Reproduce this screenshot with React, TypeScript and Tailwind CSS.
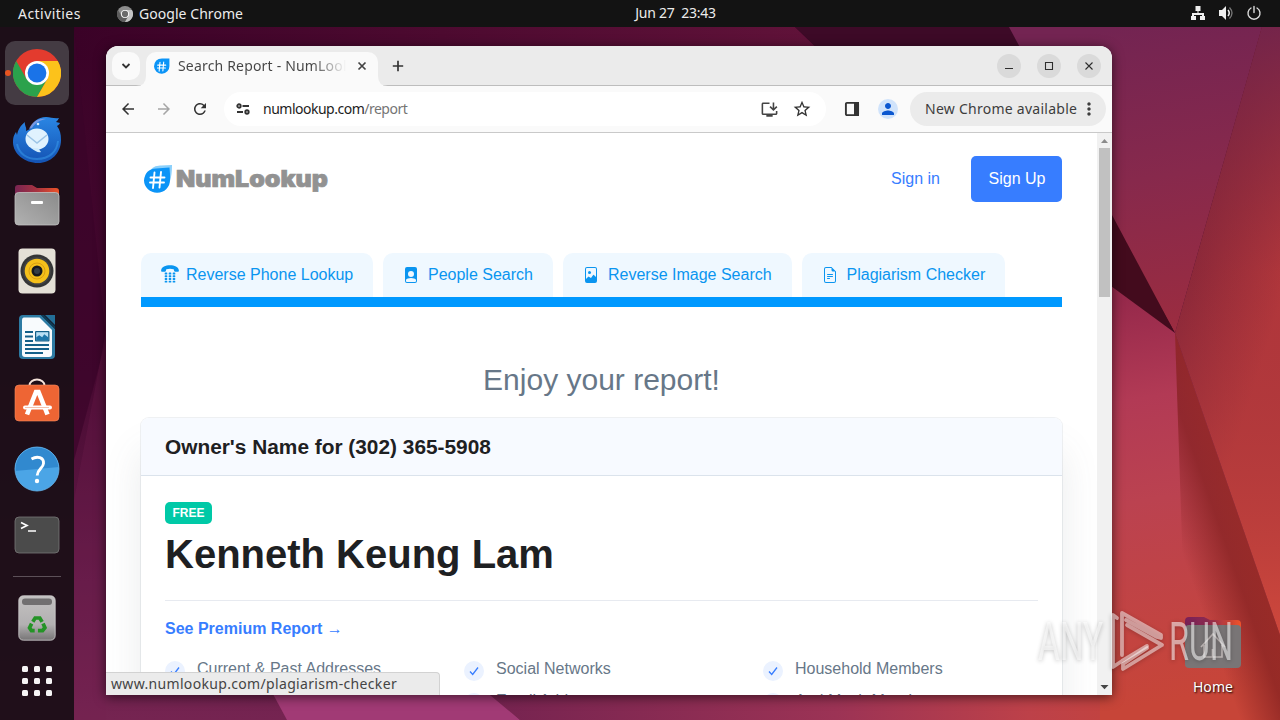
import type { ReactNode } from "react";
import { BsFileEarmarkText, BsFileImage, BsFilePersonFill } from "react-icons/bs";
import {
  MdArrowBack,
  MdArrowForward,
  MdInstallDesktop,
  MdMoreVert,
  MdPerson,
  MdRefresh,
  MdStarBorder,
} from "react-icons/md";

function Wallpaper() {
  return (
    <svg className="absolute inset-0 h-full w-full" viewBox="0 0 1280 720" preserveAspectRatio="none">
      <defs>
        <linearGradient id="wBase" gradientUnits="userSpaceOnUse" x1="0" y1="27" x2="0" y2="720">
          <stop offset="0" stopColor="#3a0227" />
          <stop offset="0.5" stopColor="#480a32" />
          <stop offset="0.8" stopColor="#641b48" />
          <stop offset="1" stopColor="#752451" />
        </linearGradient>
        <linearGradient id="wTop" gradientUnits="userSpaceOnUse" x1="74" y1="0" x2="810" y2="0">
          <stop offset="0" stopColor="#3a0227" />
          <stop offset="1" stopColor="#601239" />
        </linearGradient>
        <linearGradient id="wBottom" gradientUnits="userSpaceOnUse" x1="490" y1="0" x2="1260" y2="0">
          <stop offset="0" stopColor="#752350" />
          <stop offset="0.45" stopColor="#9c3355" />
          <stop offset="0.7" stopColor="#bd4149" />
          <stop offset="0.93" stopColor="#c74435" />
          <stop offset="1" stopColor="#a02b1d" />
        </linearGradient>
        <linearGradient id="wUpper" gradientUnits="userSpaceOnUse" x1="1120" y1="27" x2="1170" y2="330">
          <stop offset="0" stopColor="#732452" />
          <stop offset="0.5" stopColor="#87294c" />
          <stop offset="1" stopColor="#9b2c40" />
        </linearGradient>
        <linearGradient id="wRight" gradientUnits="userSpaceOnUse" x1="1180" y1="240" x2="1290" y2="275">
          <stop offset="0" stopColor="#822438" />
          <stop offset="1" stopColor="#b8393b" />
        </linearGradient>
        <linearGradient id="wRightFade" gradientUnits="userSpaceOnUse" x1="0" y1="27" x2="0" y2="640">
          <stop offset="0" stopColor="#72244c" stopOpacity="0.9" />
          <stop offset="0.4" stopColor="#902c3c" stopOpacity="0.15" />
          <stop offset="1" stopColor="#d34b3c" stopOpacity="0.85" />
        </linearGradient>
        <linearGradient id="wLower" gradientUnits="userSpaceOnUse" x1="1112" y1="300" x2="1180" y2="700">
          <stop offset="0" stopColor="#96294b" />
          <stop offset="0.25" stopColor="#b23a55" />
          <stop offset="0.5" stopColor="#bb4250" />
          <stop offset="1" stopColor="#c74538" />
        </linearGradient>
        <linearGradient id="wStreak" gradientUnits="userSpaceOnUse" x1="1192" y1="582" x2="1252" y2="561">
          <stop offset="0" stopColor="#83201f" stopOpacity="0" />
          <stop offset="0.7" stopColor="#83201f" stopOpacity="0.72" />
          <stop offset="1" stopColor="#8a2320" stopOpacity="0.76" />
        </linearGradient>
      </defs>
      <rect width="1280" height="720" fill="url(#wBase)" />
      <polygon points="74,27 795,27 830,60 74,60" fill="url(#wTop)" />
      <polygon points="795,27 1020,27 1040,90 860,90" fill="#3d0a27" />
      <polygon points="74,27 106,340 74,460" fill="#3b0429" opacity=".7" />
      <polygon points="106,330 74,500 74,720 106,720" fill="#721f50" opacity=".25" />
      <polygon points="260,670 287,720 520,720 470,670" fill="#a13a75" />
      <polygon points="460,670 520,720 1280,720 1280,670" fill="url(#wBottom)" />
      <polygon points="1009,27 1262,27 1175,333 1112,220" fill="url(#wUpper)" />
      <polygon points="1112,215 1175,333 1112,290" fill="#430b1d" />
      <polygon points="1262,27 1280,27 1280,635 1175,333" fill="url(#wRight)" />
      <polygon points="1262,27 1280,27 1280,635 1175,333" fill="url(#wRightFade)" />
      <polygon points="1100,278 1175,333 1280,635 1280,720 1100,720" fill="url(#wLower)" />
      <polygon points="1175,333 1280,635 1280,720 1188,720" fill="url(#wStreak)" />
    </svg>
  );
}

function ChromeLogo({ className, mono = false }: { className: string; mono?: boolean }) {
  const c = mono ? ["#8d8d8d", "#5d5d5d", "#c4c4c4", "#6b6b6b"] : ["#e33b2e", "#2ba24c", "#fcc21b", "#1a73e8"];
  return (
    <svg className={className} viewBox="0 0 48 48">
      <circle cx="24" cy="24" r="24" fill={c[0]} />
      <path d="M3.2 12A24 24 0 0 0 24 48L34.4 30 24 24 13.6 30z" fill={c[1]} />
      <path d="M24 48A24 24 0 0 0 44.8 12H24l10.4 18z" fill={c[2]} />
      <circle cx="24" cy="24" r="12" fill="#fff" />
      <circle cx="24" cy="24" r="9.4" fill={c[3]} />
    </svg>
  );
}

function Thunderbird() {
  return (
    <svg className="mt-px h-12 w-12" viewBox="0 0 48 48">
      <defs>
        <linearGradient id="tb" x1="0" y1="0" x2="0" y2="1">
          <stop offset="0" stopColor="#2a86e4" />
          <stop offset="1" stopColor="#1453b4" />
        </linearGradient>
      </defs>
      <path
        d="M17 13C19 6 25 1 33 1c5 0 8 2 13 1-1 2-2 3-3 4l4 1c-1 2-2 2-3 3 3 4 4 8 4 14 0 13-10 23-23 23S0 38 0 26c0-5 1-7 3-10l1 3c1-5 3-9 8-13-1 3 2 5 1 9z"
        fill="url(#tb)"
      />
      <path d="M4 28c2 10 10 15 20 15 12 0 20-7 21-18" fill="none" stroke="#3fa3f2" strokeWidth="2" opacity=".45" />
      <path d="M16 13c3-7 9-11 17-10-6 1-11 4-14 9z" fill="#8c9fe6" opacity=".8" />
      <ellipse cx="24" cy="23" rx="11.500" ry="10.500" fill="#e0f2fe" />
      <path d="M18 32c4 3 7 5 10 4l-3-4z" fill="#d0ebfc" />
      <path d="M14 19l10 8 10-8" fill="none" stroke="#9cc4e6" strokeWidth="1.500" />
      <circle cx="25" cy="8" r="1.300" fill="#cfe7ff" />
    </svg>
  );
}

function Files() {
  return (
    <svg className="h-[42px] w-[46px]" viewBox="0 0 46 42">
      <defs>
        <linearGradient id="fl" x1="0" y1="0" x2="1" y2="0">
          <stop offset="0" stopColor="#782552" />
          <stop offset=".5" stopColor="#a83340" />
          <stop offset="1" stopColor="#ed5328" />
        </linearGradient>
        <linearGradient id="flg" x1="1" y1="0" x2="0" y2="1">
          <stop offset="0" stopColor="#8b8b8b" />
          <stop offset="1" stopColor="#b1b1b1" />
        </linearGradient>
      </defs>
      <path d="M1 16V4q0-3 3-3h14l5 3h19q3 0 3 3v9z" fill="url(#fl)" />
      <rect x="1" y="8.500" width="44" height="32.500" rx="3.500" fill="url(#flg)" stroke="#c1c1c1" strokeWidth=".8" />
      <rect x="17" y="17" width="12" height="3" rx="1" fill="#fff" />
    </svg>
  );
}

function Rhythmbox() {
  return (
    <svg className="h-[46px] w-[38px]" viewBox="0 0 38 46">
      <rect x=".5" y=".5" width="37" height="45" rx="4" fill="#e4e0d6" />
      <circle cx="19" cy="23" r="16.500" fill="#343536" />
      <circle cx="19" cy="23" r="14" fill="#414243" />
      <circle cx="19" cy="23" r="12.300" fill="#f5c01a" />
      <circle cx="19" cy="23" r="8" fill="none" stroke="#d99e13" strokeWidth="1" />
      <circle cx="19" cy="23" r="5.500" fill="#17191e" />
      <circle cx="19" cy="23" r="3" fill="#333c47" />
    </svg>
  );
}

function Writer() {
  return (
    <svg className="h-[46px] w-[38px]" viewBox="0 0 38 46">
      <path d="M5 1h18l14 14v26q0 4-4 4H5q-4 0-4-4V5q0-4 4-4z" fill="#2d7ba3" />
      <path d="M27 1h10v10z" fill="#236f98" />
      <path d="M23 1l14 14v-3L26 1z" fill="#0b3b56" />
      <path d="M6 3.500h15.500L34 16v24q0 3-3 3H7q-3 0-3-3V6.500Q4 3.500 6 3.500z" fill="#f8fbfd" />
      <g fill="#146089">
        <path d="M7 17h8v2H7zM7 21.500h8v2H7zM7 26h8v2H7zM7 30h24v2H7zM7 34h24v2H7zM7 38h18v2H7z" />
        <rect x="17" y="17" width="14.500" height="10.500" rx="1" />
      </g>
      <rect x="18.200" y="18.200" width="12" height="8" fill="#b9dff4" />
      <path d="M18.200 26.200v-3l3-2 3 2 2-3 4 3v3z" fill="#1e77aa" />
    </svg>
  );
}

function Software() {
  return (
    <svg className="h-11 w-[46px]" viewBox="0 0 46 44">
      <path d="M15.500 9V7.500a7.500 6 0 0 1 15 0V9" fill="none" stroke="#f5e3da" strokeWidth="2" />
      <rect x="1" y="7" width="44" height="36" rx="4" fill="#ee6534" stroke="#f58a60" strokeWidth=".6" />
      <g stroke="#fff" strokeWidth="4.600" fill="none">
        <path d="M13 36.500 22 14h2.500l9 22.500" />
        <path d="M11 29.500h25" strokeLinecap="round" strokeWidth="4" />
      </g>
      <path d="M11 29.500h24" stroke="#f3b399" strokeWidth=".8" />
    </svg>
  );
}

function Help() {
  return (
    <svg className="h-[46px] w-[46px]" viewBox="0 0 46 46">
      <circle cx="23" cy="23" r="22" fill="#4ba5e6" />
      <path d="M1 25a22 22 0 1 1 44-4z" fill="#3189cf" />
      <circle cx="23" cy="23" r="22" fill="none" stroke="#66b6ef" strokeWidth=".8" />
      <path d="M17.500 13c6-3.500 12.500-1.500 12 4.500-.4 5-6 5.500-6.300 12" fill="none" stroke="#fff" strokeWidth="2.900" />
      <circle cx="23" cy="35" r="2.200" fill="#fff" />
    </svg>
  );
}

function Terminal() {
  return (
    <svg className="h-[38px] w-[46px]" viewBox="0 0 46 38">
      <rect x="1" y="1" width="44" height="36" rx="4" fill="#4b4b4b" stroke="#777" strokeWidth=".8" />
      <path d="M7 6.500l6 3-6 3M14 15h8" fill="none" stroke="#fff" strokeWidth="1.700" />
    </svg>
  );
}

function Trash() {
  return (
    <svg className="h-[46px] w-[38px]" viewBox="0 0 38 46">
      <defs>
        <linearGradient id="tr" x1="0" y1="0" x2="0" y2="1">
          <stop offset="0" stopColor="#c3c1c1" />
          <stop offset=".65" stopColor="#b2b0b1" />
          <stop offset="1" stopColor="#777576" />
        </linearGradient>
      </defs>
      <rect x=".8" y=".8" width="36.400" height="44.400" rx="4.500" fill="url(#tr)" stroke="#d0cecf" strokeWidth=".8" />
      <rect x="4" y="3.500" width="30" height="6.500" rx="3" fill="#716f70" />
      <g transform="translate(19 29.500) scale(.93)" fill="none" stroke="#249326" strokeWidth="4">
        <path d="M-4.500-3 -2-7H3l2.500 4.200" />
        <path d="M6.500-1 8.500 3.500 6 6.500H1" />
        <path d="M-2.500 6.500H-6L-8 3.500-5.800-1" />
      </g>
    </svg>
  );
}

function AppGrid() {
  return (
    <div className="grid grid-cols-3 gap-[6px]">
      {Array.from({ length: 9 }, (_, i) => (
        <span key={i} className="h-[6px] w-[6px] rounded-[1.5px] bg-[#f6f4f5]" />
      ))}
    </div>
  );
}

function DockSlot({ children, active = false }: { children: ReactNode; active?: boolean }) {
  return (
    <div className="relative flex h-[66px] w-[74px] shrink-0 items-center justify-center">
      {active && <span className="absolute left-[5px] top-px h-16 w-16 rounded-[10px] bg-[#443b43]" />}
      {active && <span className="absolute left-[5px] top-[30px] h-[6px] w-[6px] rounded-full bg-[#e95420]" />}
      <div className="relative">{children}</div>
    </div>
  );
}

function Dock() {
  return (
    <nav className="relative flex w-[74px] shrink-0 flex-col bg-[#1b0f17]/95 pt-[13px]">
      <DockSlot active>
        <ChromeLogo className="h-12 w-12" />
      </DockSlot>
      <DockSlot><Thunderbird /></DockSlot>
      <DockSlot><Files /></DockSlot>
      <DockSlot><Rhythmbox /></DockSlot>
      <DockSlot><Writer /></DockSlot>
      <div className="-mt-[3px] mb-[3px]"><DockSlot><Software /></DockSlot></div>
      <DockSlot><Help /></DockSlot>
      <DockSlot><Terminal /></DockSlot>
      <div className="mx-[13px] mt-[8px] h-px bg-[#5c5058]" />
      <div className="mt-[8px]"><DockSlot><Trash /></DockSlot></div>
      <div className="-mt-[3px]"><DockSlot><AppGrid /></DockSlot></div>
    </nav>
  );
}

function TopBar() {
  return (
    <header className="relative grid h-[27px] grid-cols-3 items-center bg-[#131313] text-[14px] text-[#ececec]">
      <div className="flex items-center pl-[18px]">
        <span className="w-[99px] tracking-[0.45px]">Activities</span>
        <ChromeLogo mono className="mr-[6px] h-4 w-4" />
        <span className="tracking-[0.05px]">Google Chrome</span>
      </div>
      <div className="whitespace-pre pb-[2px] pl-[208.5px] tracking-[-0.24px]">Jun 27  23:43</div>
      <div className="flex items-center justify-end gap-[12px] pb-px pr-[18px]">
        <svg className="h-4 w-4" viewBox="0 0 16 16" fill="#eee">
          <path d="M5.500 1h5v5h-2v2H14v3h1v4h-5v-4h2v-1H4v1h2v4H1v-4h1V8h5.500V6h-2z" />
        </svg>
        <svg className="h-4 w-4" viewBox="0 0 16 16" fill="#eee">
          <path d="M1 5h3l4-4v14l-4-4H1z" />
          <path d="M10 5q2.500 3 0 6" fill="none" stroke="#eee" strokeWidth="1.500" />
          <path d="M11.500 2.500q5 5.500 0 11" fill="none" stroke="#777" strokeWidth="1.300" />
        </svg>
        <svg className="h-4 w-4" viewBox="0 0 16 16" fill="none" stroke="#ddd" strokeWidth="1.400" strokeLinecap="round">
          <path d="M8 1.500v6M5 3a6 6 0 1 0 6 0" />
        </svg>
      </div>
    </header>
  );
}

function Drop({ className, pale = false }: { className: string; pale?: boolean }) {
  return (
    <svg className={className} viewBox="0 0 28 28">
      {pale && <path d="M3 12Q6 0 17 .5L28 0q0 10-2 16z" fill="#8bd0fb" />}
      <path d={pale ? "M0 15.500Q1 4 12 3.500L25.500 2.500q.8 7 .5 12.500A13 12.500 0 0 1 0 15.500z" : "M0 15Q1 1 14 1h13v13A13.500 13 0 0 1 0 15z"} fill="#0b94f7" />
      <path d="M10.500 7.500 9 23M17 7 15.500 22.500M6.500 12.500h14M6 17.500h14" stroke="#fff" strokeWidth="1.900" strokeLinecap="round" />
    </svg>
  );
}

function KeypadPhone() {
  return (
    <svg className="mb-[2px] h-[18px] w-[18px]" viewBox="0 0 18 18" fill="#0a95f0">
      <path d="M1 6.800Q0 6.800.1 5.500C.5 1.800 4.500.3 9 .3s8.500 1.500 8.900 5.200q.1 1.300-.9 1.300h-2.700q-1 0-1.200-1l-.4-1.500Q9 3.300 5.300 4.300l-.4 1.500q-.2 1-1.200 1z" />
      {[7.6, 10.3, 13, 15.7].map((y) =>
        [4, 8, 12].map((x) => <rect key={`${x}-${y}`} x={x - 0.3} y={y} width="2.600" height="1.900" rx=".6" />),
      )}
    </svg>
  );
}

function TabStrip() {
  return (
    <div className="flex h-[40px] items-start border-b border-[#bdbdbd] bg-[#ebebeb]">
      <div className="ml-[6px] mt-[6px] flex h-7 w-7 items-center justify-center rounded-[10px] bg-[#fafafa]">
        <svg viewBox="0 0 10 8" width="10" height="8" fill="none" stroke="#333" strokeWidth="1.800">
          <path d="M1.500 2 5 5.500 8.500 2" />
        </svg>
      </div>
      <div className="relative ml-[6px] mt-[6px] flex h-[34px] w-[232px] items-center rounded-t-[10px] bg-[#fafafa] pb-[6px] pl-2 pr-[10px]">
        <svg className="absolute -left-[10px] bottom-0 h-[10px] w-[10px]" viewBox="0 0 10 10">
          <path d="M10 0v10H0Q10 10 10 0" fill="#fafafa" />
        </svg>
        <svg className="absolute -right-[10px] bottom-0 h-[10px] w-[10px]" viewBox="0 0 10 10">
          <path d="M0 0v10h10Q0 10 0 0" fill="#fafafa" />
        </svg>
        <Drop className="mr-2 h-4 w-4 shrink-0" />
        <span className="-mt-[2px] w-[168px] overflow-hidden whitespace-nowrap bg-[linear-gradient(90deg,#444_80%,transparent)] bg-clip-text text-[14px] tracking-[0.18px] text-transparent">
          Search Report - NumLookup
        </span>
        <svg className="ml-auto h-3 w-3" viewBox="0 0 12 12" stroke="#444" strokeWidth="1.700">
          <path d="M2.500 2.500l7 7M9.500 2.500l-7 7" />
        </svg>
      </div>
      <svg className="ml-[14px] mt-[14px] h-3 w-3" viewBox="0 0 12 12" stroke="#333" strokeWidth="1.700">
        <path d="M6 .8v10.400M.8 6h10.400" />
      </svg>
      <div className="ml-auto mr-[11px] mt-[8px] flex gap-4">
        {["M8 14.500h8", "M8.500 8.500h7v7h-7z", "M8.500 8.500l7 7M15.500 8.500l-7 7"].map((d) => (
          <span key={d} className="flex h-6 w-6 items-center justify-center rounded-full bg-[#dadada]">
            <svg className="h-6 w-6" viewBox="0 0 24 24" fill="none" stroke="#2d2d2d" strokeWidth="1.100">
              <path d={d} />
            </svg>
          </span>
        ))}
      </div>
    </div>
  );
}

function Toolbar() {
  return (
    <div className="flex h-[47px] items-center border-b border-[#c9c9c9] bg-[#fafafa] text-[#333]">
      <MdArrowBack className="ml-[13px] h-[18px] w-[18px]" />
      <MdArrowForward className="ml-[18px] h-[18px] w-[18px] text-[#a5a5a5]" />
      <MdRefresh className="ml-[18px] h-[18px] w-[18px]" />
      <div className="ml-[15px] flex h-[34px] w-[602px] items-center rounded-full bg-white">
        <svg className="ml-[12px]" width="14" height="12" viewBox="0 0 14 12" fill="none" stroke="#333" strokeWidth="1.900">
          <circle cx="3" cy="3" r="1.700" />
          <path d="M6.500 3H13M1 9h6" />
          <circle cx="11" cy="9" r="1.700" />
        </svg>
        <span className="-mt-[2px] ml-[13px] text-[14px] tracking-[-0.5px] text-[#1d1d1d]">
          numlookup.com<span className="text-[#757575]">/report</span>
        </span>
        <MdInstallDesktop className="ml-auto h-[19px] w-[19px] text-[#444]" />
        <MdStarBorder className="ml-[13px] mr-[14px] h-[20px] w-[20px] text-[#333]" />
      </div>
      <svg className="ml-[18px] h-4 w-4" viewBox="0 0 16 16">
        <rect x="1.900" y="1.900" width="12.200" height="12.200" rx="1" fill="none" stroke="#333" strokeWidth="1.900" />
        <path d="M10 1h5v14h-5z" fill="#333" />
      </svg>
      <span className="ml-[18px] flex h-5 w-5 items-center justify-center rounded-full bg-[#d0e3fb]">
        <MdPerson className="h-[18px] w-[18px] text-[#0b57d0]" />
      </span>
      <div className="ml-[12px] flex h-[34px] w-[196px] items-center rounded-full bg-[#ebebeb] pl-[15px] text-[14px] text-[#3d3d3d]">
        <span className="-mt-[2px] whitespace-nowrap tracking-[0.26px]">New Chrome available</span>
        <MdMoreVert className="ml-auto mr-[7px] h-5 w-5 shrink-0" />
      </div>
    </div>
  );
}

const tools = [
  { label: "Reverse Phone Lookup", icon: <KeypadPhone />, box: "w-[232px] pl-[20px] gap-[7px]" },
  { label: "People Search", icon: <BsFilePersonFill className="mb-px h-4 w-4" />, box: "w-[170px] pl-[20px] gap-[9px]" },
  { label: "Reverse Image Search", icon: <BsFileImage className="mb-px h-4 w-4" />, box: "w-[229px] pl-[20px] gap-[9px]" },
  { label: "Plagiarism Checker", icon: <BsFileEarmarkText className="mb-px h-4 w-4" />, box: "w-[203px] pl-[20px] gap-[8.5px]" },
];

const features = [
  "Current & Past Addresses",
  "Social Networks",
  "Household Members",
  "Phone Numbers",
  "Email Addresses",
  "And Much More!",
];

function Page() {
  return (
    <main className="h-[562px] flex-1 overflow-hidden bg-white pl-[35px] pr-[35px] [font-family:'Liberation_Sans',sans-serif]">
      <div className="flex h-[92px] items-center">
        <Drop pale className="ml-[3px] h-7 w-7" />
        <svg className="ml-[3px] h-8 w-[156px]" viewBox="0 0 156 32">
          <text x="1" y="24" textLength="152" lengthAdjust="spacingAndGlyphs" fill="#929292" stroke="#929292" strokeWidth=".7" fontFamily="Inter, sans-serif" fontWeight="900" fontSize="23">
            NumLookup
          </text>
        </svg>
        <span className="ml-auto text-base text-[#377dff]">Sign in</span>
        <button className="ml-[31px] h-[46px] w-[91px] rounded-[5px] bg-[#377dff] pl-px text-base text-white">Sign Up</button>
      </div>
      <div className="mt-[28px] flex gap-[10px] border-b-[10px] border-[#0099ff]">
        {tools.map((t) => (
          <div key={t.label} className={`flex h-[44px] items-center whitespace-nowrap rounded-t-[10px] bg-[#eff8ff] text-base text-[#0a95f0] ${t.box}`}>
            {t.icon}
            <span>{t.label}</span>
          </div>
        ))}
      </div>
      <h1 className="mt-[53px] text-center text-[30px] leading-[40px] text-[#677788]">Enjoy your report!</h1>
      <section className="mt-[18px] h-[340px] rounded-t-[8px] bg-white shadow-[0_0_0_1px_rgba(33,50,91,0.07),0_34px_38px_rgba(90,98,112,0.13)]">
        <h2 className="flex h-[58px] items-center rounded-t-[8px] border-b border-[#dbe3ec] bg-[#f7faff] px-6 text-[20.85px] font-bold text-[#1e2022]">
          Owner's Name for (302) 365-5908
        </h2>
        <div className="px-6 pt-[26px]">
          <span className="flex h-[22px] w-[47px] items-center justify-center rounded-[5px] bg-[#00c9a7] text-[12px] font-bold text-white">FREE</span>
          <p className="mt-[6px] text-[40px] font-bold leading-[48px] text-[#1e2022]">Kenneth Keung Lam</p>
          <div className="mt-[22px] h-px bg-[#e7eaf0]" />
          <p className="mt-[16px] text-base font-bold text-[#377dff]">See Premium Report →</p>
          <ul className="mt-[16px] grid grid-cols-[299px_299px_1fr] gap-y-2">
            {features.map((f) => (
              <li key={f} className="flex h-6 gap-3 whitespace-nowrap text-base text-[#677788]">
                <svg className="mt-[4px] h-5 w-5" viewBox="0 0 20 20">
                  <circle cx="10" cy="10" r="10" fill="#ebf2ff" />
                  <path d="M6 10.500l2.700 3L14 6.500" fill="none" stroke="#377dff" strokeWidth="1.300" />
                </svg>
                {f}
              </li>
            ))}
          </ul>
        </div>
      </section>
    </main>
  );
}

function Scrollbar() {
  return (
    <div className="flex w-[15px] flex-col items-center bg-[#f1f1f1]">
      <svg className="h-[15px] w-[15px]" viewBox="0 0 15 15"><path d="M4 10l3.500-4 3.500 4z" fill="#8b8b8b" /></svg>
      <div className="h-[149px] w-[11px] bg-[#c1c1c1]" />
      <svg className="mt-auto h-[15px] w-[15px]" viewBox="0 0 15 15"><path d="M3.500 5l4 4.200 4-4.200z" fill="#454545" /></svg>
    </div>
  );
}

function BrowserWindow() {
  return (
    <div className="relative ml-8 mt-[19px] flex h-[649px] w-[1006px] flex-col overflow-hidden rounded-t-[12px] bg-white shadow-[0_2px_12px_rgba(0,0,0,0.6)]">
      <TabStrip />
      <Toolbar />
      <div className="flex h-[562px]">
        <Page />
        <Scrollbar />
      </div>
      <div className="absolute bottom-0 left-0 flex h-[23px] w-[334px] items-center rounded-tr-[4px] border-r border-t border-[#d2d2d2] bg-[#ebebeb] pb-[2px] pl-[5px] text-[14px] tracking-[0.33px] text-[#444]">
        www.numlookup.com/plagiarism-checker
      </div>
    </div>
  );
}

function HomeFolder() {
  return (
    <div className="absolute left-[1173px] top-[614px] flex w-20 flex-col items-center">
      <svg className="h-[56px] w-[58px]" viewBox="0 0 58 56">
        <defs>
          <linearGradient id="hf" x1="0" y1="0" x2="1" y2="0">
            <stop offset="0" stopColor="#792058" />
            <stop offset=".4" stopColor="#8c2a50" />
            <stop offset="1" stopColor="#f0532a" />
          </linearGradient>
        </defs>
        <path d="M1 18V7q0-4 4-4h15l6 3h27q4 0 4 4v8z" fill="url(#hf)" />
        <rect x="1" y="11" width="56" height="43" rx="4" fill="#797576" />
        <path d="M17 33l12-13 12 13M20 31v12h18V31M28.500 43v-8" fill="none" stroke="#bcb5b4" strokeWidth="1.700" />
      </svg>
      <span className="mt-[6px] text-[14px] tracking-[0.1px] text-white [text-shadow:1px_1px_2px_#000]">Home</span>
    </div>
  );
}

function Watermark() {
  return (
    <svg className="absolute left-[1030px] top-[600px] h-[80px] w-[210px] drop-shadow-[0_1px_2px_rgba(0,0,0,0.4)]" viewBox="0 0 210 80">
      <g fontFamily="Roboto, sans-serif" fontWeight="400" fontSize="53" fill="#fff" fillOpacity=".55">
        <text x="8" y="60" textLength="65" lengthAdjust="spacingAndGlyphs">ANY</text>
        <text x="139" y="60" textLength="64" lengthAdjust="spacingAndGlyphs">RUN</text>
      </g>
      <g fill="none" stroke="#fff" strokeOpacity=".5" strokeWidth="3.800" strokeLinejoin="round" strokeLinecap="round">
        <path d="M92 55V13l39 22v3l-4-1-31-17" />
        <path d="M97 25l35 20-39 24v-5l24-16" />
        <path d="M87 18l-4-3v52l9-6 25-15" />
      </g>
    </svg>
  );
}

export default function App() {
  return (
    <div className="relative flex h-[720px] w-[1280px] flex-col overflow-hidden [font-family:'Noto_Sans','Open_Sans',sans-serif]">
      <Wallpaper />
      <TopBar />
      <div className="flex h-[693px]">
        <Dock />
        <BrowserWindow />
      </div>
      <HomeFolder />
      <Watermark />
    </div>
  );
}
